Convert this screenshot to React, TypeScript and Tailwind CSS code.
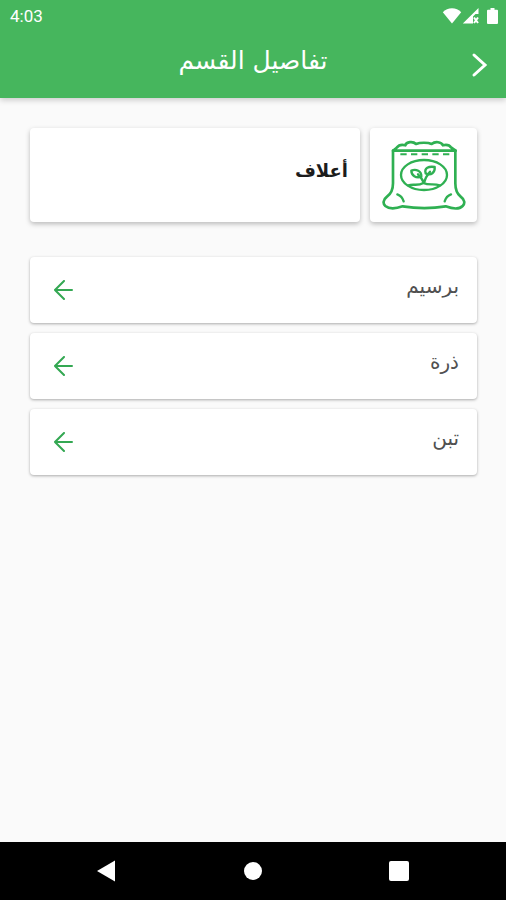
import React from 'react';

const items: string[] = ['برسيم', 'ذرة', 'تبن'];

function StatusBar() {
  return (
    <div dir="ltr" className="flex h-8 items-center justify-between pr-2 pl-[10px]">
      <span className="font-['Roboto',sans-serif] text-[17px] leading-8">4:03</span>
      <div className="flex items-center">
        <svg width="20" height="16" viewBox="0 0 20 16" fill="currentColor" aria-hidden="true">
          <path d="M.8 4.200C5.500-1 14.500-1 19.200 4.200L10 15.500z" />
        </svg>
        <svg width="18" height="16" viewBox="0 0 18 16" fill="currentColor" aria-hidden="true">
          <path d="M.8 15.500 16.500 0v6h-3L11 8.500v7z" />
          <path d="m12 9.500 4 5.500M16 9.500 12 15" stroke="currentColor" strokeWidth="2" />
        </svg>
        <svg className="ml-[7px]" width="11" height="16" viewBox="0 0 11 16" fill="currentColor" aria-hidden="true">
          <path d="M3.500 0h4v1.700H10q1 0 1 1V15q0 1-1 1H1q-1 0-1-1V2.700q0-1 1-1h2.500z" />
        </svg>
      </div>
    </div>
  );
}

function FeedBagIcon() {
  return (
    <svg
      width="84"
      height="70"
      viewBox="64 60 252 210"
      fill="none"
      stroke="#2fb052"
      strokeWidth="8"
      strokeLinecap="round"
      strokeLinejoin="round"
      aria-hidden="true"
    >
      <path d="M97 92 108 83C115 74 124 73 134 76C137 65 157 63 166 72C178 67 202 67 213 72C224 63 242 66 247 76C258 73 267 76 272 83L285 92Z" />
      <path d="M97 92V190C97 211 92 221 79 230C67 239 66 251 74 258C86 268 106 266 126 259C164 265 218 265 255 259C274 266 296 268 306 258C314 250 312 239 300 230C288 221 284 211 284 190V92" />
      <path d="M119 103H266" strokeWidth="6" strokeDasharray="19 13" strokeLinecap="butt" />
      <ellipse cx="190" cy="165" rx="69" ry="45" strokeWidth="7" />
      <path d="M110 223Q124 228 129 244M271 223Q257 228 252 244" strokeWidth="7" />
      <path d="M143 196C158 191 172 199 188 189C205 197 220 190 237 196" strokeWidth="7" />
      <path d="M190 189Q194 171 208 155M190 189Q185 176 172 163" strokeWidth="7" />
      <path d="M182 170C166 176 152 166 152 152C166 146 183 153 182 170Z" strokeWidth="7" />
      <path d="M195 160C190 144 204 138 222 141C224 158 211 168 195 160Z" strokeWidth="7" />
    </svg>
  );
}

export default function App() {
  return (
    <div
      dir="rtl"
      className="flex min-h-screen flex-col bg-[#fafafa] font-['DejaVu_Sans','Noto_Sans',sans-serif]"
    >
      <header className="bg-[#46b65d] text-white shadow-[0_2px_6px_rgba(0,0,0,0.2)]">
        <StatusBar />
        <div className="grid h-[66px] grid-cols-[52px_1fr_52px] items-center">
          <button type="button" aria-label="رجوع" className="flex h-12 items-center justify-center">
            <svg width="18" height="26" viewBox="0 0 18 26" fill="none" stroke="currentColor" strokeWidth="3" strokeLinecap="round" aria-hidden="true">
              <path d="M3 3 14 13 3 23" />
            </svg>
          </button>
          <h1 className="pb-2 text-center text-[25px] leading-8">تفاصيل القسم</h1>
        </div>
      </header>

      <main className="flex-1 pt-[30px] pr-[29px] pl-[30px]">
        <section className="flex gap-[10px]">
          <div className="flex h-[94px] w-[107px] shrink-0 items-center justify-center rounded-[4px] bg-white shadow-[0_2px_5px_rgba(0,0,0,0.26)]">
            <FeedBagIcon />
          </div>
          <div className="flex flex-1 items-center rounded-[4px] bg-white px-3 pb-2 shadow-[0_2px_5px_rgba(0,0,0,0.26)]">
            <h2 className="text-lg leading-8 font-bold text-[#1c1c1c]">أعلاف</h2>
          </div>
        </section>

        <ul className="mt-[35px] flex flex-col gap-[10px]">
          {items.map((item) => (
            <li key={item}>
              <button
                type="button"
                className="flex h-[66px] w-full items-center justify-between rounded-[4px] bg-white pr-[18px] pl-6 shadow-[0_1px_3px_rgba(0,0,0,0.32)]"
              >
                <span className="pb-2 text-xl leading-8 text-[#505050]">{item}</span>
                <svg width="20" height="20" viewBox="0 0 20 20" fill="none" stroke="#34a853" strokeWidth="2" strokeLinecap="round" aria-hidden="true">
                  <path d="M18 10H1M10 1 1 10l9 9" />
                </svg>
              </button>
            </li>
          ))}
        </ul>
      </main>

      <nav dir="ltr" className="grid h-[58px] grid-cols-3 bg-black px-[34px] text-white">
        <button type="button" aria-label="رجوع" className="flex items-center justify-center">
          <svg width="20" height="22" viewBox="0 0 20 22" fill="currentColor" aria-hidden="true">
            <path d="M0 11 18 .5v21z" />
          </svg>
        </button>
        <button type="button" aria-label="الرئيسية" className="flex items-center justify-center">
          <span className="size-[18px] rounded-full bg-white" />
        </button>
        <button type="button" aria-label="التطبيقات" className="flex items-center justify-center">
          <span className="size-5 rounded-[2px] bg-white" />
        </button>
      </nav>
    </div>
  );
}
